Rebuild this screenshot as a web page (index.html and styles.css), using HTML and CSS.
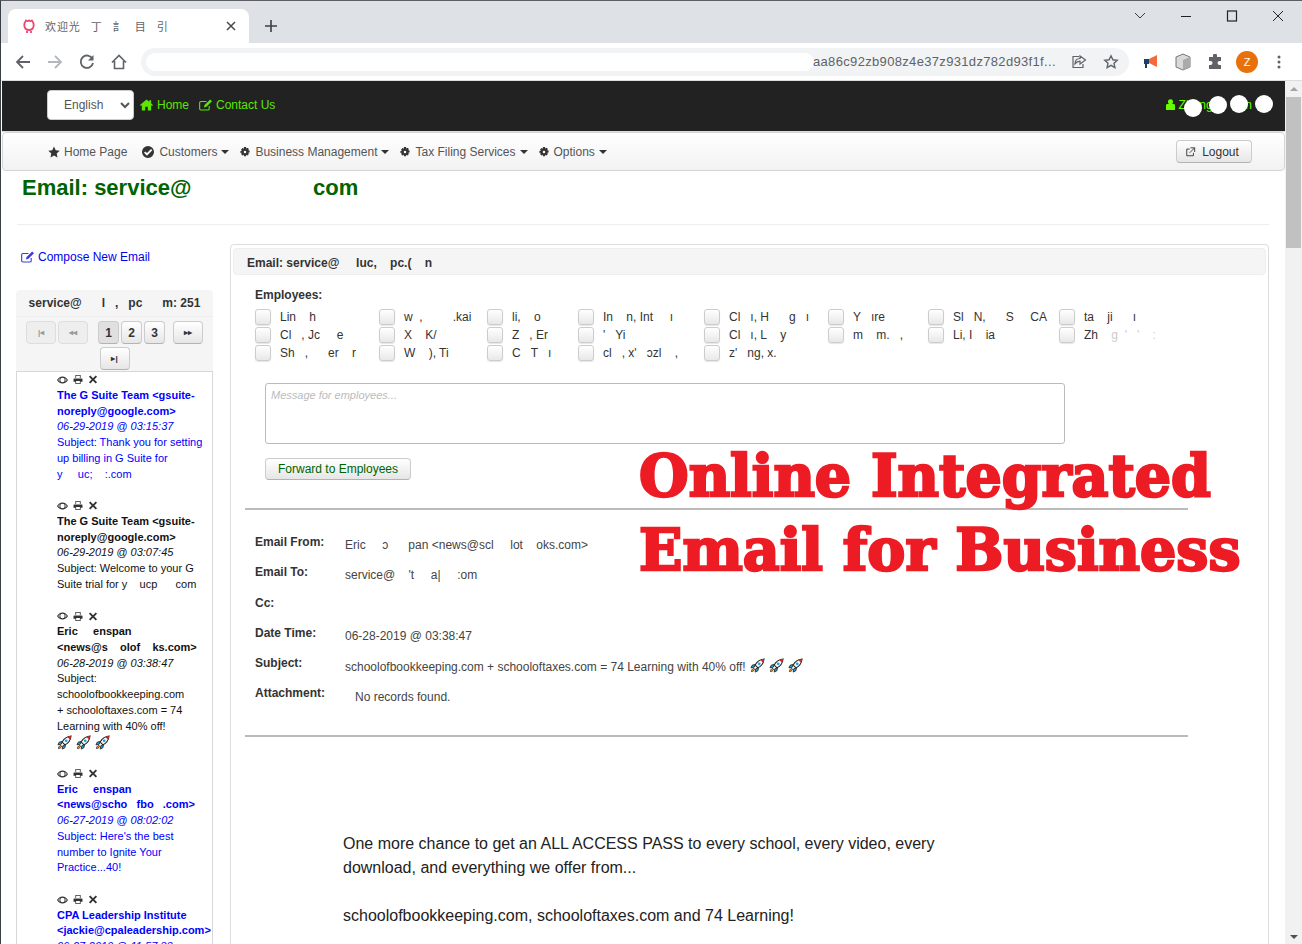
FILE: index.html
```html
<!DOCTYPE html>
<html>
  <head>
    <title>Email</title>
    <link rel="stylesheet" href="styles.css">
  </head>
  <body>
    <svg class="defs" width="0" height="0">
      <symbol id="i-home" viewBox="0 0 14 12"><path d="M7 0 0 6l1 1 1-.8V12h3.600V8h2.800v4H12V6.200l1 .8 1-1-2-1.700V1h-2v1.600z"/></symbol>
      <symbol id="i-edit" viewBox="0 0 14 12"><path fill="none" stroke="currentColor" stroke-width="1.200" d="M11 7v3a1.400 1.400 0 0 1-1.400 1.400H2A1.400 1.400 0 0 1 .7 10V3.500A1.400 1.400 0 0 1 2 2.200h6"/><path d="M12 .2 14 2 8 8l-2.800.8L6 6z"/></symbol>
      <symbol id="i-user" viewBox="0 0 10 12"><circle cx="5" cy="3" r="2.800"/><path d="M1.500 5.500h7A1.500 1.500 0 0 1 10 7v5H0V7a1.500 1.500 0 0 1 1.500-1.500z"/></symbol>
      <symbol id="i-star" viewBox="0 0 12 12"><path d="m6 .5 1.700 3.700 4 .5-3 2.700.8 4L6 9.400l-3.500 2 .8-4-3-2.700 4-.5z"/></symbol>
      <symbol id="i-ok" viewBox="0 0 12 12"><path fill-rule="evenodd" d="M6 0a6 6 0 1 1 0 12A6 6 0 0 1 6 0zm3 3L5 7 3.300 5.400 2 6.700 5 9.700 10.300 4.300z"/></symbol>
      <symbol id="i-cog" viewBox="0 0 12 12"><path fill-rule="evenodd" d="M4.800 0h2.400l.3 1.700 1.500-.9 1.700 1.700-.9 1.500 1.700.3v2.400l-1.700.3.900 1.500-1.700 1.700-1.500-.9-.3 1.700H4.800l-.3-1.700-1.500.9-1.700-1.700.9-1.500L.5 7.200V4.800l1.700-.3-.9-1.500L3 1.300l1.500.9zM6 4.500a1.500 1.500 0 1 0 0 3 1.500 1.500 0 0 0 0-3z"/></symbol>
      <symbol id="i-ext" viewBox="0 0 12 12"><path fill="none" stroke="currentColor" stroke-width="1.100" d="M5 2.500H1.500v8h8V7M6 1h5v5M11 1 5 7"/></symbol>
      <symbol id="i-eye" viewBox="0 0 14 10"><path fill-rule="evenodd" d="M7 .5c3 0 5.500 2 7 4.500-1.500 2.500-4 4.500-7 4.500S1.500 7.500 0 5C1.500 2.500 4 .5 7 .5zm0 1.700a2.800 2.800 0 1 0 0 5.600 2.800 2.800 0 0 0 0-5.600zM1.500 5c1 1.300 2 2.300 3 2.900a4 4 0 0 1 0-5.800c-1 .6-2 1.600-3 2.900zm11 0c-1-1.300-2-2.300-3-2.900a4 4 0 0 1 0 5.800c1-.6 2-1.600 3-2.900z"/></symbol>
      <symbol id="i-print" viewBox="0 0 12 12"><path fill-rule="evenodd" d="M2.500 0h7v4h-1V1h-5v3h-1zM1 4.500h10a1 1 0 0 1 1 1V9h-2.500v3h-7V9H0V5.500a1 1 0 0 1 1-1zM3.500 8v3h5V8z"/></symbol>
      <symbol id="i-x" viewBox="0 0 10 10"><path d="M2 .5 5 3.500 8 .5 9.500 2 6.500 5l3 3L8 9.500l-3-3-3 3L.5 8l3-3-3-3z"/></symbol>
      <symbol id="i-rocket" viewBox="0 0 16 16"><path fill="#f4f8fa" stroke="#222" stroke-width="1.100" d="M15 1c-4.500.5-7.500 2.500-9.500 6.500l3 3c4-2 6-5 6.500-9.500z"/><path fill="#d9241c" d="M15 1c-1.500.2-2.800.5-4 1.100L13.900 5c.6-1.200.9-2.500 1.100-4z"/><circle cx="9.800" cy="6.200" r="1.500" fill="#1fa3dc"/><path fill="#1fa3dc" stroke="#222" stroke-width=".9" d="M5.500 7 2.500 7.500 1 10.500l3.500-.7zM9 10.500 8.500 13.500 5.500 15l.7-3.500z"/><path fill="#f08a24" stroke="#222" stroke-width=".8" d="M4 11c-1.500.5-2.500 2-2.500 3.500C3 14.500 4.500 13.500 5 12z"/></symbol>
    </svg>

    <div class="window">
      <div class="tabstrip">
        <div class="tab">
          <svg class="favicon" width="12" height="16" viewBox="0 0 12 16"><path fill="none" stroke="#ef476f" stroke-width="1.800" d="M3 2.500c-1.500 2-2 4-1.500 6 .4 2 2 3.500 4.500 3.500s4.100-1.500 4.500-3.500c.5-2 0-4-1.500-6-1 .8-2 .8-3 0-1 .8-2 .8-3 0zM4 13v2M8 13v2"/></svg>
          <span class="tab-title">欢迎光&nbsp;&nbsp;&nbsp;丁&nbsp;&nbsp;&nbsp;訁&nbsp;&nbsp;&nbsp;目&nbsp;&nbsp;&nbsp;引</span>
          <svg class="tab-close" width="10" height="10" viewBox="0 0 10 10"><path stroke="#45494d" stroke-width="1.500" d="m1 1 8 8M9 1 1 9"/></svg>
        </div>
        <svg class="new-tab" width="14" height="14" viewBox="0 0 14 14"><path stroke="#3c4043" stroke-width="1.600" d="M7 1v12M1 7h12"/></svg>
        <div class="win-controls">
          <svg width="12" height="8" viewBox="0 0 12 8"><path fill="none" stroke="#3c4043" d="m1 1 5 5 5-5"/></svg>
          <svg width="12" height="12" viewBox="0 0 12 12"><path stroke="#222" d="M1 6.500h10"/></svg>
          <svg width="12" height="12" viewBox="0 0 12 12"><rect x="1.500" y="1" width="9" height="10" fill="none" stroke="#222" stroke-width="1.200"/></svg>
          <svg width="12" height="12" viewBox="0 0 12 12"><path stroke="#222" d="m1 1 10 10M11 1 1 11"/></svg>
        </div>
      </div>

      <div class="toolbar">
        <svg class="tb-icon" width="16" height="16" viewBox="0 0 16 16"><path fill="none" stroke="#5f6368" stroke-width="1.800" d="M15 8H2M8 2 2 8l6 6"/></svg>
        <svg class="tb-icon" width="16" height="16" viewBox="0 0 16 16"><path fill="none" stroke="#b4b7bb" stroke-width="1.800" d="M1 8h13M8 2l6 6-6 6"/></svg>
        <svg class="tb-icon" width="16" height="16" viewBox="0 0 16 16"><path fill="none" stroke="#5f6368" stroke-width="1.800" d="M13.500 5A6.200 6.200 0 1 0 14 9"/><path fill="#5f6368" d="M14.500 1v5.500H9z"/></svg>
        <svg class="tb-icon" width="16" height="16" viewBox="0 0 16 16"><path fill="none" stroke="#5f6368" stroke-width="1.600" d="M1 8.500 8 1.500l7 7M3.500 7v7.500h9V7"/></svg>
        <div class="omnibox">
          <span class="url-mask"></span>
          <span class="url">aa86c92zb908z4e37z931dz782d93f1f...</span>
          <svg width="16" height="16" viewBox="0 0 16 16"><path fill="none" stroke="#5f6368" stroke-width="1.200" d="M8 2.500H2v11h10V10M9 2v2.500C5.500 4.500 4 7 4 10c1.500-2 3-2.800 5-2.800V10l5.500-4z"/></svg>
          <svg width="16" height="16" viewBox="0 0 16 16"><path fill="none" stroke="#5f6368" stroke-width="1.400" d="m8 1.800 1.900 4 4.300.5-3.200 3 .9 4.300L8 11.400l-3.900 2.200.9-4.300-3.200-3 4.300-.5z"/></svg>
        </div>
        <div class="ext-icons">
          <svg width="16" height="16" viewBox="0 0 16 16"><path fill="#f4683c" d="M6 5 14 1v12L6 9z"/><path fill="#1d3f66" d="M1 5h5v5H4v4H2v-4H1z"/></svg>
          <svg width="16" height="18" viewBox="0 0 16 18"><path fill="#d9d9d9" stroke="#777" d="m8 1 7 3v10l-7 3-7-3V4z"/><path fill="#aaa" d="m8 7 7-3v10l-7 3z"/></svg>
          <svg width="16" height="16" viewBox="0 0 16 16"><path fill="#5f6368" d="M6 1.500a2 2 0 0 1 4 0V3h4v4h-1.500a2 2 0 0 0 0 4H14v4H2v-4h1.500a2 2 0 0 0 0-4H2V3h4z"/></svg>
          <span class="avatar">Z</span>
          <svg width="4" height="14" viewBox="0 0 4 14"><circle cx="2" cy="2" r="1.500" fill="#5f6368"/><circle cx="2" cy="7" r="1.500" fill="#5f6368"/><circle cx="2" cy="12" r="1.500" fill="#5f6368"/></svg>
        </div>
      </div>

      <div class="viewport">
        <div class="page">
          <div class="topbar">
            <select class="lang"><option>English</option></select>
            <a class="top-link"><svg class="ic"><use href="#i-home"/></svg>Home</a>
            <a class="top-link"><svg class="ic"><use href="#i-edit"/></svg>Contact Us</a>
            <span class="top-user">
              <svg class="ic-user"><use href="#i-user"/></svg>Zheng&nbsp;&nbsp;&nbsp;&nbsp;&nbsp;&nbsp;&nbsp;Lin
              <i class="blob b1"></i><i class="blob b2"></i><i class="blob b3"></i><i class="blob b4"></i>
            </span>
          </div>

          <div class="menubar">
            <a class="menu-item menu-first"><svg class="ic"><use href="#i-star"/></svg>Home Page</a>
            <a class="menu-item"><svg class="ic ic-ok"><use href="#i-ok"/></svg>Customers<b class="caret"></b></a>
            <a class="menu-item"><svg class="ic ic-cog"><use href="#i-cog"/></svg>Business Management<b class="caret"></b></a>
            <a class="menu-item"><svg class="ic ic-cog"><use href="#i-cog"/></svg>Tax Filing Services<b class="caret"></b></a>
            <a class="menu-item"><svg class="ic ic-cog"><use href="#i-cog"/></svg>Options<b class="caret"></b></a>
            <button class="logout"><svg class="ic"><use href="#i-ext"/></svg>Logout</button>
          </div>

          <h1 class="page-title"><span class="title-a">Email: service@</span><span>com</span></h1>
          <hr class="title-rule">

          <div class="columns">
            <div class="side">
              <a class="compose"><svg class="ic"><use href="#i-edit"/></svg>Compose New Email</a>
              <div class="side-panel">
                <div class="side-head">service@&nbsp;&nbsp;&nbsp;&nbsp;&nbsp;&nbsp;l&nbsp;&nbsp;&nbsp;,&nbsp;&nbsp;&nbsp;pc&nbsp;&nbsp;&nbsp;&nbsp;&nbsp;&nbsp;m: 251</div>
                <div class="pager">
                  <button class="pg pg-wide" disabled>|◂</button>
                  <button class="pg pg-wide" disabled>◂◂</button>
                  <button class="pg pg-num pg-on">1</button>
                  <button class="pg pg-num">2</button>
                  <button class="pg pg-num">3</button>
                  <button class="pg pg-wide pg-next">▸▸</button>
                  <button class="pg pg-wide">▸|</button>
                </div>
                <ul class="mail-list">
                  <li class="mail">
                    <div class="mail-icons"><svg class="ic-eye"><use href="#i-eye"/></svg><svg class="ic-act"><use href="#i-print"/></svg><svg class="ic-act"><use href="#i-x"/></svg></div>
                    <div class="from">The G Suite Team &lt;gsuite-</div>
                    <div class="from">noreply@google.com&gt;</div>
                    <div class="when">06-29-2019 @ 03:15:37</div>
                    <div>Subject: Thank you for setting</div>
                    <div>up billing in G Suite for</div>
                    <div>y&nbsp;&nbsp;&nbsp;&nbsp;&nbsp;uc;&nbsp;&nbsp;&nbsp;&nbsp;:.com</div>
                  </li>
                  <li class="mail mail-read">
                    <div class="mail-icons"><svg class="ic-eye"><use href="#i-eye"/></svg><svg class="ic-act"><use href="#i-print"/></svg><svg class="ic-act"><use href="#i-x"/></svg></div>
                    <div class="from">The G Suite Team &lt;gsuite-</div>
                    <div class="from">noreply@google.com&gt;</div>
                    <div class="when">06-29-2019 @ 03:07:45</div>
                    <div>Subject: Welcome to your G</div>
                    <div>Suite trial for y&nbsp;&nbsp;&nbsp;&nbsp;ucp&nbsp;&nbsp;&nbsp;&nbsp;&nbsp;&nbsp;com</div>
                  </li>
                  <li class="mail mail-read">
                    <div class="mail-icons"><svg class="ic-eye"><use href="#i-eye"/></svg><svg class="ic-act"><use href="#i-print"/></svg><svg class="ic-act"><use href="#i-x"/></svg></div>
                    <div class="from">Eric&nbsp;&nbsp;&nbsp;&nbsp;&nbsp;enspan</div>
                    <div class="from">&lt;news@s&nbsp;&nbsp;&nbsp;&nbsp;olof&nbsp;&nbsp;&nbsp;&nbsp;ks.com&gt;</div>
                    <div class="when">06-28-2019 @ 03:38:47</div>
                    <div>Subject:</div>
                    <div>schoolofbookkeeping.com</div>
                    <div>+ schooloftaxes.com = 74</div>
                    <div>Learning with 40% off!</div>
                    <div class="rockets"><svg><use href="#i-rocket"/></svg><svg><use href="#i-rocket"/></svg><svg><use href="#i-rocket"/></svg></div>
                  </li>
                  <li class="mail">
                    <div class="mail-icons"><svg class="ic-eye"><use href="#i-eye"/></svg><svg class="ic-act"><use href="#i-print"/></svg><svg class="ic-act"><use href="#i-x"/></svg></div>
                    <div class="from">Eric&nbsp;&nbsp;&nbsp;&nbsp;&nbsp;enspan</div>
                    <div class="from">&lt;news@scho&nbsp;&nbsp;&nbsp;fbo&nbsp;&nbsp;&nbsp;.com&gt;</div>
                    <div class="when">06-27-2019 @ 08:02:02</div>
                    <div>Subject: Here's the best</div>
                    <div>number to Ignite Your</div>
                    <div>Practice...40!</div>
                  </li>
                  <li class="mail">
                    <div class="mail-icons"><svg class="ic-eye"><use href="#i-eye"/></svg><svg class="ic-act"><use href="#i-print"/></svg><svg class="ic-act"><use href="#i-x"/></svg></div>
                    <div class="from">CPA Leadership Institute</div>
                    <div class="from">&lt;jackie@cpaleadership.com&gt;</div>
                    <div class="when">06-27-2019 @ 11:57:33</div>
                  </li>
                </ul>
              </div>
            </div>

            <div class="detail">
              <div class="detail-head">Email: service@&nbsp;&nbsp;&nbsp;&nbsp;&nbsp;luc,&nbsp;&nbsp;&nbsp;&nbsp;pc.(&nbsp;&nbsp;&nbsp;&nbsp;n</div>
              <div class="detail-body">
                <div class="emp-label">Employees:</div>
                <div class="emp-grid">
                  <label class="emp"><input type="checkbox">Lin&nbsp;&nbsp;&nbsp;&nbsp;h</label>
                  <label class="emp"><input type="checkbox">w&nbsp;&nbsp;,&nbsp;&nbsp;&nbsp;&nbsp;&nbsp;&nbsp;&nbsp;&nbsp;&nbsp;.kai</label>
                  <label class="emp"><input type="checkbox">li,&nbsp;&nbsp;&nbsp;&nbsp;o</label>
                  <label class="emp"><input type="checkbox">In&nbsp;&nbsp;&nbsp;&nbsp;n, Int&nbsp;&nbsp;&nbsp;&nbsp;&nbsp;ı</label>
                  <label class="emp"><input type="checkbox">Cl&nbsp;&nbsp;&nbsp;ı, H&nbsp;&nbsp;&nbsp;&nbsp;&nbsp;&nbsp;g&nbsp;&nbsp;&nbsp;ı</label>
                  <label class="emp"><input type="checkbox">Y&nbsp;&nbsp;&nbsp;ıre</label>
                  <label class="emp"><input type="checkbox">Sl&nbsp;&nbsp;&nbsp;N,&nbsp;&nbsp;&nbsp;&nbsp;&nbsp;&nbsp;S&nbsp;&nbsp;&nbsp;&nbsp;&nbsp;CA</label>
                  <label class="emp"><input type="checkbox">ta&nbsp;&nbsp;&nbsp;&nbsp;ji&nbsp;&nbsp;&nbsp;&nbsp;&nbsp;&nbsp;ı</label>
                  <label class="emp"><input type="checkbox">Cl&nbsp;&nbsp;&nbsp;, Jc&nbsp;&nbsp;&nbsp;&nbsp;&nbsp;e</label>
                  <label class="emp"><input type="checkbox">X&nbsp;&nbsp;&nbsp;&nbsp;K/</label>
                  <label class="emp"><input type="checkbox">Z&nbsp;&nbsp;&nbsp;, Er</label>
                  <label class="emp"><input type="checkbox">'&nbsp;&nbsp;&nbsp;Yi</label>
                  <label class="emp"><input type="checkbox">Cl&nbsp;&nbsp;&nbsp;ı, L&nbsp;&nbsp;&nbsp;&nbsp;y</label>
                  <label class="emp"><input type="checkbox">m&nbsp;&nbsp;&nbsp;&nbsp;m.&nbsp;&nbsp;&nbsp;,</label>
                  <label class="emp"><input type="checkbox">Li, I&nbsp;&nbsp;&nbsp;&nbsp;ia</label>
                  <label class="emp"><input type="checkbox">Zh&nbsp;&nbsp;&nbsp;&nbsp;<span class="faint">g&nbsp;&nbsp;'&nbsp;&nbsp;&nbsp;'&nbsp;&nbsp;&nbsp;&nbsp;:</span></label>
                  <label class="emp"><input type="checkbox">Sh&nbsp;&nbsp;&nbsp;,&nbsp;&nbsp;&nbsp;&nbsp;&nbsp;&nbsp;er&nbsp;&nbsp;&nbsp;&nbsp;r</label>
                  <label class="emp"><input type="checkbox">W&nbsp;&nbsp;&nbsp;&nbsp;), Ti</label>
                  <label class="emp"><input type="checkbox">C&nbsp;&nbsp;&nbsp;T&nbsp;&nbsp;&nbsp;ı</label>
                  <label class="emp"><input type="checkbox">cl&nbsp;&nbsp;&nbsp;, x'&nbsp;&nbsp;&nbsp;ɔzl&nbsp;&nbsp;&nbsp;&nbsp;,</label>
                  <label class="emp"><input type="checkbox">z'&nbsp;&nbsp;&nbsp;ng, x.</label>
                </div>
                <textarea class="emp-msg" placeholder="Message for employees..."></textarea>
                <button class="forward">Forward to Employees</button>
                <hr class="rule rule-1">
                <div class="facts">
                  <div class="fact-k">Email From:</div>
                  <div class="fact-v">Eric&nbsp;&nbsp;&nbsp;&nbsp;&nbsp;ɔ&nbsp;&nbsp;&nbsp;&nbsp;&nbsp;&nbsp;pan &lt;news@scl&nbsp;&nbsp;&nbsp;&nbsp;&nbsp;lot&nbsp;&nbsp;&nbsp;&nbsp;oks.com&gt;</div>
                  <div class="fact-k">Email To:</div>
                  <div class="fact-v">service@&nbsp;&nbsp;&nbsp;&nbsp;'t&nbsp;&nbsp;&nbsp;&nbsp;&nbsp;a|&nbsp;&nbsp;&nbsp;&nbsp;&nbsp;:om</div>
                  <div class="fact-k">Cc:</div>
                  <div class="fact-v"></div>
                  <div class="fact-k">Date Time:</div>
                  <div class="fact-v">06-28-2019 @ 03:38:47</div>
                  <div class="fact-k">Subject:</div>
                  <div class="fact-v">schoolofbookkeeping.com + schooloftaxes.com = 74 Learning with 40% off!
                    <svg class="rocket-sm"><use href="#i-rocket"/></svg><svg class="rocket-sm"><use href="#i-rocket"/></svg><svg class="rocket-sm"><use href="#i-rocket"/></svg></div>
                  <div class="fact-k">Attachment:</div>
                  <div class="fact-v fact-none">No records found.</div>
                </div>
                <hr class="rule rule-2">
                <div class="message">
                  <p>One more chance to get an ALL ACCESS PASS to every school, every video, every<br>download, and everything we offer from...</p>
                  <p>schoolofbookkeeping.com, schooloftaxes.com and 74 Learning!</p>
                </div>
              </div>
              <div class="promo">Online Integrated<br>Email for Business</div>
            </div>
          </div>
        </div>

        <div class="scrollbar">
          <span class="arrow-up"></span>
          <span class="thumb"></span>
          <span class="arrow-down"></span>
        </div>
      </div>
    </div>
  </body>
</html>
```

FILE: styles.css
```css
html, body {
  margin: 0;
  height: 100%;
  overflow: hidden;
}
body {
  background: #fff;
  font-family: "Liberation Sans", Arial, sans-serif;
  font-size: 12px;
  color: #333;
}
.defs {
  position: absolute;
}
.window {
  height: 944px;
  box-sizing: border-box;
  border-left: 1px solid #3a3f44;
  border-top: 1px solid #5b5f63;
  display: flex;
  flex-direction: column;
}

/* browser chrome */
.tabstrip {
  height: 42px;
  background: #dee1e6;
  display: flex;
  align-items: flex-end;
  flex-shrink: 0;
}
.tab {
  width: 241px;
  height: 34px;
  margin-left: 7px;
  padding: 0 13px 0 15px;
  box-sizing: border-box;
  background: #fff;
  border-radius: 8px 8px 0 0;
  display: flex;
  align-items: center;
}
.tab-title {
  flex: 1;
  margin-left: 10px;
  font-family: "Noto Sans CJK SC", sans-serif;
  font-size: 11px;
  letter-spacing: 0.9px;
  color: #5f6368;
  white-space: nowrap;
  overflow: hidden;
}
.new-tab {
  margin: 0 0 10px 15px;
}
.win-controls {
  margin-left: auto;
  height: 30px;
  align-self: flex-start;
  display: flex;
  align-items: center;
  gap: 34px;
  padding-right: 18px;
}
.toolbar {
  height: 38px;
  padding-left: 14px;
  display: flex;
  align-items: center;
  border-bottom: 1px solid #dadce0;
  flex-shrink: 0;
  box-sizing: border-box;
}
.tb-icon {
  margin-right: 16px;
  flex-shrink: 0;
}
.omnibox {
  width: 988px;
  height: 28px;
  margin-left: -2px;
  background: #f1f3f4;
  border-radius: 14px;
  display: flex;
  align-items: center;
  padding: 0 10px 0 5px;
  box-sizing: border-box;
  gap: 16px;
}
.url-mask {
  width: 668px;
  height: 18px;
  background: #fff;
  border-radius: 9px;
  margin-right: -17px;
  flex-shrink: 0;
}
.url {
  font-size: 13px;
  letter-spacing: 0.33px;
  color: #5f6368;
  white-space: nowrap;
  width: 244px;
  overflow: hidden;
  flex-shrink: 0;
  margin-right: -2px;
}
.ext-icons {
  display: flex;
  align-items: center;
  gap: 16px;
  margin-left: 14px;
}
.avatar {
  width: 22px;
  height: 22px;
  margin: 0 3px 0 -3px;
  border-radius: 50%;
  background: #e8710a;
  color: #fff;
  font-size: 11px;
  line-height: 22px;
  text-align: center;
}

/* page */
.viewport {
  flex: 1;
  display: flex;
  min-height: 0;
}
.page {
  width: 1284px;
  padding-left: 1px;
  box-sizing: border-box;
  overflow: hidden;
}
.scrollbar {
  width: 17px;
  background: #f1f1f1;
  display: flex;
  flex-direction: column;
  align-items: center;
}
.arrow-up, .arrow-down {
  width: 0;
  height: 0;
  border-left: 4px solid transparent;
  border-right: 4px solid transparent;
}
.arrow-up {
  margin-top: 6px;
  border-bottom: 4px solid #a3a3a3;
}
.arrow-down {
  margin: auto 0 5px;
  border-top: 4px solid #505050;
}
.thumb {
  width: 15px;
  height: 151px;
  margin-top: 6px;
  background: #c1c1c1;
}
.topbar {
  height: 48px;
  padding-bottom: 2px;
  background: #222;
  display: flex;
  align-items: center;
  position: relative;
  border-bottom: 1px solid #ddd;
}
.lang {
  width: 87px;
  height: 30px;
  margin: 0 6px 0 45px;
  padding-left: 12px;
  font-family: "Liberation Sans", Arial, sans-serif;
  font-size: 12px;
  color: #555;
  background: #fff;
  border: 1px solid #ccc;
  border-radius: 4px;
}
.top-link {
  color: #5ce600;
  margin: 0 10px 1px 0;
  white-space: nowrap;
  font-size: 12px;
}
.top-link .ic {
  fill: #5ce600;
  color: #5ce600;
}
.ic {
  width: 13px;
  height: 12px;
  margin-right: 4px;
  vertical-align: -2px;
}
.top-user {
  margin-left: auto;
  margin-right: 33px;
  color: #66ff00;
  position: relative;
  white-space: nowrap;
}
.ic-user {
  width: 9px;
  height: 11px;
  fill: #66ff00;
  margin-right: 4px;
  vertical-align: -1px;
}
.blob {
  position: absolute;
  background: #fff;
  border-radius: 50%;
  width: 18px;
  height: 18px;
}
.b1 { left: 18px; top: 1px; }
.b2 { left: 43px; top: -2px; }
.b3 { left: 64px; top: -3px; }
.b4 { left: 89px; top: -3px; }
.menubar {
  height: 39px;
  padding-left: 45px;
  display: flex;
  align-items: center;
  gap: 11px;
  background: linear-gradient(#fff, #f2f2f2);
  border: 1px solid #d4d4d4;
  border-radius: 4px;
  box-sizing: border-box;
}
.menu-item {
  color: #555;
  white-space: nowrap;
}
.menu-first {
  margin-right: 4px;
}
.menu-item .ic {
  fill: #333;
  color: #333;
  width: 12px;
  margin-right: 4px;
}
.menu-item .ic-ok {
  margin-right: 5px;
}
.menu-item .ic-cog {
  width: 10px;
  height: 10px;
  margin-right: 5px;
  vertical-align: -1px;
}
.caret {
  display: inline-block;
  margin-left: 4px;
  vertical-align: 2px;
  border-top: 4px solid #333;
  border-left: 4px solid transparent;
  border-right: 4px solid transparent;
}
.logout {
  margin-left: auto;
  margin-right: 32px;
  width: 76px;
  height: 23px;
  padding: 0 4px 0 0;
  font-family: inherit;
  font-size: 12px;
  color: #333;
  background: linear-gradient(#fff, #e6e6e6);
  border: 1px solid #ccc;
  border-bottom-color: #b3b3b3;
  border-radius: 4px;
}
.logout .ic {
  fill: none;
  color: #333;
  width: 11px;
  height: 10px;
  margin-right: 6px;
  vertical-align: -1px;
}
.page-title {
  margin: 3px 0 0 20px;
  height: 28px;
  font-size: 22px;
  line-height: 28px;
  font-weight: bold;
  color: #006400;
  white-space: nowrap;
}
.title-a {
  display: inline-block;
  width: 291px;
}
.title-rule {
  margin: 22px 16px 0 15px;
  border: 0;
  border-top: 1px solid #eee;
}
.columns {
  display: flex;
  padding-top: 20px;
}
.side {
  width: 197px;
  margin-left: 14px;
  flex-shrink: 0;
}
.compose {
  display: block;
  height: 24px;
  margin: 5px 0 0 5px;
  color: #0000ee;
  white-space: nowrap;
}
.compose .ic {
  fill: #3a3ae8;
  color: #3a3ae8;
  margin-right: 4px;
}
.side-panel {
  margin-top: 16px;
}
.side-head {
  height: 26px;
  line-height: 26px;
  text-align: center;
  font-weight: bold;
  white-space: nowrap;
  background: #f5f5f5;
  border-bottom: 1px solid #eee;
  border-radius: 4px 4px 0 0;
}
.pager {
  height: 54px;
  padding: 4px 8px 0;
  box-sizing: border-box;
  background: #f5f5f5;
  display: flex;
  flex-wrap: wrap;
  justify-content: center;
  align-content: flex-start;
  column-gap: 2px;
  row-gap: 3px;
}
.pg {
  height: 23px;
  padding: 0;
  font-family: inherit;
  font-size: 12px;
  font-weight: bold;
  color: #333;
  background: linear-gradient(#fff, #e6e6e6);
  border: 1px solid #ccc;
  border-bottom-color: #b3b3b3;
  border-radius: 4px;
}
.pg-wide {
  width: 30px;
  font-size: 8px;
}
.pg-num {
  width: 21px;
}
.pg:disabled {
  color: #999;
  background: #eee;
  border-color: #ddd;
}
.pg-num.pg-on {
  margin-left: 8px;
  background: #e0e0e0;
}
.pg-next {
  margin-left: 6px;
}
.mail-list {
  list-style: none;
  margin: 0;
  padding: 0 0 0 40px;
  border: 1px solid #d8d8d8;
  border-bottom: 0;
  font-size: 11px;
  line-height: 15.75px;
  color: #0000ff;
}
.mail {
  margin-bottom: 15.75px;
  white-space: nowrap;
}
.mail-read {
  color: #111;
}
.from {
  font-weight: bold;
  overflow: hidden;
}
.when {
  font-style: italic;
}
.mail-icons {
  height: 15.75px;
  display: flex;
  align-items: center;
  gap: 5px;
}
.mail-icons svg {
  fill: #333;
}
.ic-eye {
  width: 11px;
  height: 8px;
}
.ic-act {
  width: 10px;
  height: 9px;
}
.rockets {
  height: 15.75px;
  display: flex;
  align-items: center;
  gap: 4px;
}
.rockets svg {
  width: 15px;
  height: 15px;
}
.rocket-sm {
  width: 15px;
  height: 15px;
  margin-left: 1px;
  margin-right: 3px;
  vertical-align: -2px;
}
.detail {
  width: 1039px;
  height: 800px;
  margin-left: 17px;
  padding: 3px 2px;
  border: 1px solid #ddd;
  border-radius: 4px;
  box-sizing: border-box;
  position: relative;
  margin-top: -1px;
}
.detail-head {
  height: 27px;
  line-height: 29px;
  padding-left: 13px;
  font-weight: bold;
  background: #f5f5f5;
  border: 1px solid #eee;
  border-radius: 4px;
  box-sizing: border-box;
}
.detail-body {
  padding: 0 0 0 12px;
}
.emp-label {
  margin: 13px 0 6px 10px;
  font-weight: bold;
  line-height: 14px;
}
.emp-grid {
  margin-left: 10px;
  display: grid;
  grid-template-columns: 124px 108px 91px 126px 124px 100px 131px 130px;
  grid-auto-rows: 18px;
}
.emp {
  display: flex;
  align-items: center;
  white-space: nowrap;
  color: #333;
}
.faint {
  color: #ccc;
}
.emp input {
  appearance: none;
  width: 16px;
  height: 16px;
  margin: 0 9px 0 0;
  background: linear-gradient(#fff, #e8e8e8);
  border: 1px solid #ccc;
  border-radius: 3px;
  box-shadow: 0 1px 1px rgba(0, 0, 0, 0.1);
  flex-shrink: 0;
}
.emp-msg {
  display: block;
  width: 800px;
  height: 61px;
  margin: 21px 0 0 20px;
  padding: 5px;
  box-sizing: border-box;
  border: 1px solid #bbb;
  border-radius: 3px;
  font-family: inherit;
  font-size: 11px;
  font-style: italic;
  resize: none;
}
.emp-msg::placeholder {
  color: #bbb;
}
.forward {
  display: block;
  width: 146px;
  height: 22px;
  margin: 14px 0 0 20px;
  padding: 0;
  font-family: inherit;
  font-size: 12px;
  color: #006400;
  background: linear-gradient(#fff, #e6e6e6);
  border: 1px solid #ccc;
  border-bottom-color: #b3b3b3;
  border-radius: 4px;
}
.rule {
  width: 943px;
  margin: 0;
  border: 0;
  border-top: 2px solid #bbb;
}
.rule-1 {
  margin-top: 28px;
}
.rule-2 {
  margin-top: 19px;
}
.facts {
  margin: 24px 0 0 10px;
  display: grid;
  grid-template-columns: 90px 1fr;
  grid-auto-rows: 30.3px;
}
.fact-k {
  font-weight: bold;
  line-height: 16px;
}
.fact-v {
  padding-top: 3px;
  line-height: 16px;
  color: #444;
  white-space: nowrap;
}
.fact-none {
  padding-left: 10px;
  padding-top: 4px;
}
.message {
  margin: 95px 0 0 98px;
  font-size: 16px;
  line-height: 24px;
  color: #222;
}
.message p {
  margin: 0 0 24px;
}

/* red banner laid over the mail */
.promo {
  position: absolute;
  left: 408px;
  top: 194px;
  font-family: "DejaVu Serif", serif;
  font-weight: bold;
  font-size: 57px;
  line-height: 74px;
  color: #ed1c24;
  -webkit-text-stroke: 2.5px #ed1c24;
  white-space: nowrap;
}
```
